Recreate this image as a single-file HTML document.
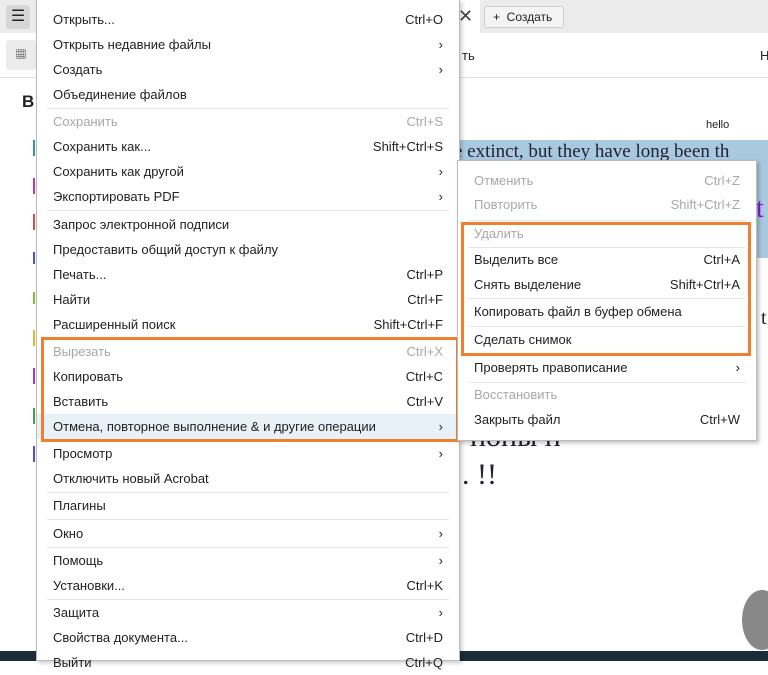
<!DOCTYPE html>
<html><head><meta charset="utf-8"><style>
*{margin:0;padding:0;box-sizing:border-box}
body{width:768px;height:661px;overflow:hidden;position:relative;background:#fff;font-family:"Liberation Sans","Noto Sans CJK SC",sans-serif;font-size:13px;color:#222}
.a{position:absolute}
.it{position:absolute;left:0;right:0;height:25px;line-height:25px;padding-left:16px}
.it .k{position:absolute;right:16px;top:0}
.d{color:#a8a8a8}
.sep{position:absolute;left:10px;right:10px;height:1px;background:#e6e6e6}
.ser{font-family:"Liberation Serif",serif;font-size:20px;color:#223}
</style></head><body>
<div class="a" style="left:0;top:0;width:768px;height:33px;background:#ececec"></div>
<div class="a" style="left:440px;top:0;width:40px;height:33px;background:#fff"></div>
<div class="a" style="left:458px;top:6px;font-size:18px;color:#444">✕</div>
<div class="a" style="left:484px;top:6px;width:80px;height:22px;border:1px solid #ccc;border-radius:3px;background:#f4f4f4;font-size:12px;line-height:20px;padding-left:8px">+&nbsp; Создать</div>
<div class="a" style="left:6px;top:5px;width:24px;height:24px;background:#d6d6d6;border-radius:3px;font-size:16px;line-height:24px;text-align:center">☰</div>
<div class="a" style="left:0;top:33px;width:768px;height:45px;background:#fff;border-bottom:1px solid #e2e2e2"></div>
<div class="a" style="left:6px;top:40px;width:30px;height:30px;background:#ececec;border-radius:3px;font-size:11px;text-align:center;line-height:30px">▦</div>
<div class="a" style="left:462px;top:48px">ть</div>
<div class="a" style="left:760px;top:48px">Н</div>
<div class="a" style="left:22px;top:92px;font-weight:bold;font-size:17px">В</div>
<div class="a" style="left:706px;top:119px;font-size:11px">hello</div>
<div class="a" style="left:459px;top:140px;width:309px;height:118px;background:#a9c9e1"></div>
<div class="a ser" style="left:454px;top:141px;font-size:19px">e extinct, but they have long been th</div>
<div class="a ser" style="left:756px;top:193px;color:#8a1ad6;font-size:28px">t</div>
<div class="a ser" style="left:761px;top:307px">t</div>
<div class="a ser" style="left:470px;top:420px;font-size:30px">ноны п</div>
<div class="a ser" style="left:462px;top:458px;font-size:30px">. !!</div>
<div class="a" style="left:742px;top:590px;width:40px;height:60px;border-radius:50%;background:#888"></div>
<div class="a" style="left:0;top:651px;width:768px;height:10px;background:#1d2b3a"></div>
<div class="a" style="left:33px;top:140px;width:2px;height:16px;background:#3a9a9a"></div>
<div class="a" style="left:33px;top:178px;width:2px;height:16px;background:#c33a9a"></div>
<div class="a" style="left:33px;top:214px;width:2px;height:16px;background:#d05050"></div>
<div class="a" style="left:33px;top:252px;width:2px;height:12px;background:#5050d0"></div>
<div class="a" style="left:33px;top:292px;width:2px;height:12px;background:#8aba3a"></div>
<div class="a" style="left:33px;top:330px;width:2px;height:16px;background:#d0c030"></div>
<div class="a" style="left:33px;top:368px;width:2px;height:16px;background:#a040c0"></div>
<div class="a" style="left:33px;top:408px;width:2px;height:16px;background:#40a050"></div>
<div class="a" style="left:33px;top:446px;width:2px;height:16px;background:#5050d0"></div>

<!-- main menu -->
<div class="a" style="left:36px;top:0;width:424px;height:661px;background:#fff;border:1px solid #bbb;border-top:none;box-shadow:2px 2px 4px rgba(0,0,0,.2)">
<div class="it" style="top:7px">Открыть...<span class="k">Ctrl+O</span></div>
<div class="it" style="top:32px">Открыть недавние файлы<span class="k">›</span></div>
<div class="it" style="top:57px">Создать<span class="k">›</span></div>
<div class="it" style="top:82px">Объединение файлов</div>
<div class="sep" style="top:108px"></div>
<div class="it d" style="top:109px">Сохранить<span class="k">Ctrl+S</span></div>
<div class="it" style="top:134px">Сохранить как...<span class="k">Shift+Ctrl+S</span></div>
<div class="it" style="top:159px">Сохранить как другой<span class="k">›</span></div>
<div class="it" style="top:184px">Экспортировать PDF<span class="k">›</span></div>
<div class="sep" style="top:210px"></div>
<div class="it" style="top:212px">Запрос электронной подписи</div>
<div class="it" style="top:237px">Предоставить общий доступ к файлу</div>
<div class="it" style="top:262px">Печать...<span class="k">Ctrl+P</span></div>
<div class="it" style="top:287px">Найти<span class="k">Ctrl+F</span></div>
<div class="it" style="top:312px">Расширенный поиск<span class="k">Shift+Ctrl+F</span></div>
<div class="sep" style="top:338px"></div>
<div class="it d" style="top:339px">Вырезать<span class="k">Ctrl+X</span></div>
<div class="it" style="top:364px">Копировать<span class="k">Ctrl+C</span></div>
<div class="it" style="top:389px">Вставить<span class="k">Ctrl+V</span></div>
<div class="it" style="top:414px;background:#e8f0f8">Отмена, повторное выполнение &amp; и другие операции<span class="k">›</span></div>
<div class="it" style="top:441px">Просмотр<span class="k">›</span></div>
<div class="it" style="top:466px">Отключить новый Acrobat</div>
<div class="sep" style="top:492px"></div>
<div class="it" style="top:493px">Плагины</div>
<div class="sep" style="top:519px"></div>
<div class="it" style="top:521px">Окно<span class="k">›</span></div>
<div class="sep" style="top:547px"></div>
<div class="it" style="top:548px">Помощь<span class="k">›</span></div>
<div class="it" style="top:573px">Установки...<span class="k">Ctrl+K</span></div>
<div class="sep" style="top:599px"></div>
<div class="it" style="top:600px">Защита<span class="k">›</span></div>
<div class="it" style="top:625px">Свойства документа...<span class="k">Ctrl+D</span></div>
<div class="it" style="top:650px">Выйти<span class="k">Ctrl+Q</span></div>
</div>
<div class="a" style="left:41px;top:337px;width:418px;height:105px;border:3px solid #f08030"></div>

<!-- submenu -->
<div class="a" style="left:457px;top:160px;width:300px;height:281px;background:#fff;border:1px solid #bbb;box-shadow:2px 2px 4px rgba(0,0,0,.25)">
<div class="it d" style="top:7px">Отменить<span class="k">Ctrl+Z</span></div>
<div class="it d" style="top:31px">Повторить<span class="k">Shift+Ctrl+Z</span></div>
<div class="sep" style="top:59px"></div>
<div class="it d" style="top:60px">Удалить</div>
<div class="sep" style="top:86px"></div>
<div class="it" style="top:86px">Выделить все<span class="k">Ctrl+A</span></div>
<div class="it" style="top:111px">Снять выделение<span class="k">Shift+Ctrl+A</span></div>
<div class="sep" style="top:137px"></div>
<div class="it" style="top:138px">Копировать файл в буфер обмена</div>
<div class="sep" style="top:165px"></div>
<div class="it" style="top:166px">Сделать снимок</div>
<div class="it" style="top:194px">Проверять правописание<span class="k">›</span></div>
<div class="sep" style="top:221px"></div>
<div class="it d" style="top:221px">Восстановить</div>
<div class="it" style="top:246px">Закрыть файл<span class="k">Ctrl+W</span></div>
</div>
<div class="a" style="left:461px;top:222px;width:290px;height:134px;border:3px solid #f08030"></div>
</body></html>
